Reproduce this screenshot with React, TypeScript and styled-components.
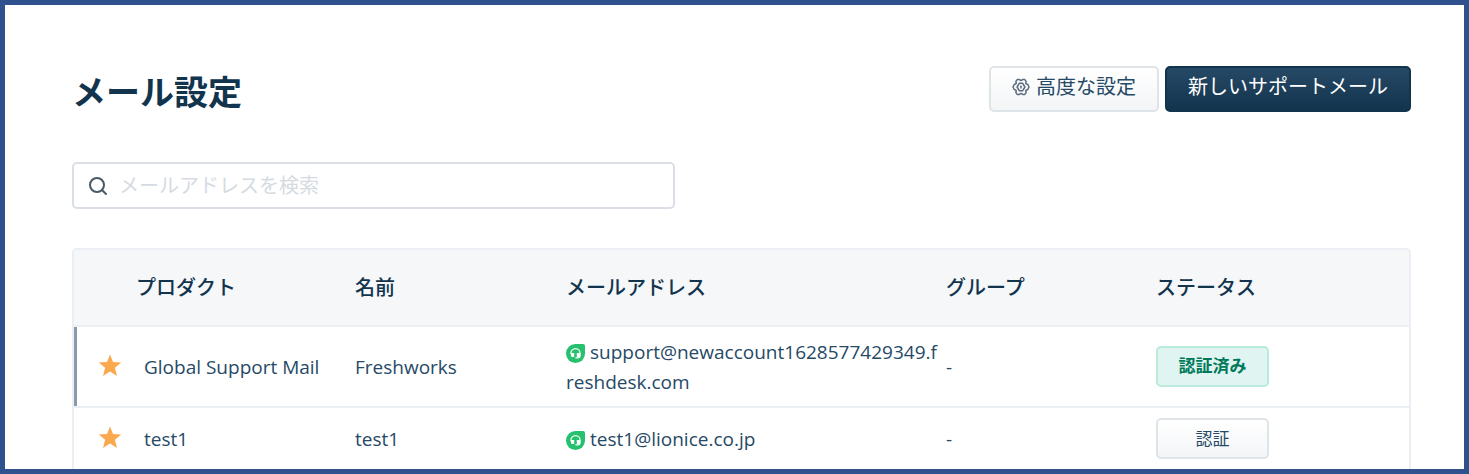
import React from "react";
import styled, { createGlobalStyle, css } from "styled-components";

const GlobalStyle = createGlobalStyle`
  *, *::before, *::after { box-sizing: border-box; }
  body {
    margin: 0;
    background: #fff;
    color: #264966;
    font: 19px/30px "Open Sans", "Noto Sans CJK JP", sans-serif;
  }
  button, input { font-family: inherit; }
`;

const Frame = styled.main`
  min-height: 100vh;
  padding: 61px 53px 0 67px;
  border: 5px solid #2f528f;
`;

const Header = styled.header`
  display: flex;
  justify-content: space-between;
  align-items: flex-start;
`;

const Title = styled.h1`
  margin: 0;
  padding-top: 2px;
  color: #12344d;
  font-size: 34px;
  line-height: 48px;
  font-weight: 700;
`;

const Actions = styled.div`
  display: flex;
  gap: 6px;
`;

const Button = styled.button<{ $primary?: boolean; $small?: boolean }>`
  display: inline-flex;
  align-items: center;
  justify-content: center;
  gap: 6px;
  height: 46px;
  padding: 0 21px 4px;
  border: 2px solid #dfe4e9;
  border-radius: 5px;
  background: linear-gradient(#fff, #f3f5f7);
  color: #264966;
  font-size: 20px;
  line-height: 30px;
  cursor: pointer;
  ${(p) =>
    p.$primary &&
    css`
      border-color: #12344d;
      background: linear-gradient(#264966, #12344d);
      color: #fff;
    `}
  ${(p) =>
    p.$small &&
    css`
      width: 113px;
      height: 41px;
      padding: 0;
      font-size: 17px;
      vertical-align: middle;
    `}
`;

const SearchBox = styled.label`
  display: flex;
  align-items: center;
  gap: 11px;
  width: 45%;
  height: 47px;
  margin: 46px 0 39px;
  padding: 0 14px;
  border: 2px solid #dadfe5;
  border-radius: 5px;
`;

const SearchInput = styled.input`
  flex: 1;
  min-width: 0;
  padding: 0;
  border: 0;
  outline: 0;
  background: none;
  color: #264966;
  font-size: 20px;
  line-height: 30px;
  &::placeholder {
    color: #d5dbe1;
    opacity: 1;
  }
`;

const TableBox = styled.div`
  overflow: hidden;
  border: 2px solid #ebeff3;
  border-bottom: 0;
  border-radius: 5px 5px 0 0;
`;

const Table = styled.table`
  width: 100%;
  table-layout: fixed;
  border-collapse: separate;
  border-spacing: 0;
`;

const Col = styled.col<{ $width?: number }>`
  width: ${(p) => (p.$width ? `${p.$width}px` : "auto")};
`;

const HeadCell = styled.th`
  height: 77px;
  padding: 0;
  border-bottom: 2px solid #ebeff3;
  background: #f5f7f9;
  color: #12344d;
  font-size: 20px;
  font-weight: 500;
  text-align: left;
`;

const Row = styled.tr<{ $height: number; $marked?: boolean }>`
  height: ${(p) => p.$height}px;
  & > td:first-child {
    box-shadow: ${(p) => (p.$marked ? "inset 3px 0 #8a9aa9" : "none")};
  }
  &:not(:last-child) > td {
    border-bottom: 2px solid #ebeff3;
  }
`;

const Cell = styled.td<{ $indent?: number; $end?: number }>`
  padding: 0 ${(p) => p.$end ?? 0}px 0 ${(p) => p.$indent ?? 0}px;
  vertical-align: middle;
  word-break: break-all;
`;

const Badge = styled.span`
  display: inline-flex;
  align-items: center;
  justify-content: center;
  width: 113px;
  height: 41px;
  padding-bottom: 2px;
  border: 2px solid #b9eadc;
  border-radius: 5px;
  background: #e0f5f1;
  color: #00795b;
  font-size: 17px;
  font-weight: 700;
  vertical-align: middle;
`;

const StarSvg = styled.svg`
  display: block;
  margin-bottom: 3px;
`;

const LeafSvg = styled.svg`
  margin-right: 5px;
  vertical-align: -4px;
`;

const Gear = () => (
  <svg width="18" height="18" viewBox="0 0 18 18" fill="none" stroke="#5a6b7a" strokeWidth="1.5" strokeLinejoin="round" aria-hidden="true">
    <path d="M5.2 1.6h2.200L9 2.600l1.600-1h2.200l1.300 1.800-.3 2.200 2 .9L17 9l-1.200 2.500-2 .9.3 2.200-1.300 1.800h-2.200L9 15.400l-1.600 1H5.200l-1.300-1.800.3-2.200-2-.9L1 9l1.200-2.500 2-.9-.3-2.200z" />
    <path d="M7.300 5.300h3.400L12.900 9l-2.200 3.700H7.300L5.100 9z" />
    <path d="M9 7.500v3" />
  </svg>
);

const Magnifier = () => (
  <svg width="20" height="20" viewBox="0 0 20 20" fill="none" stroke="#475867" strokeWidth="2" strokeLinecap="round" aria-hidden="true">
    <circle cx="9" cy="9" r="7" />
    <path d="m14 14 4 4" />
  </svg>
);

const Star = () => (
  <StarSvg width="24" height="23" viewBox="0 0 24 23" fill="#faa94f" role="img" aria-label="既定">
    <path d="M12 .5 15 8l8.200.5-6.300 5.200 2.100 8.200-7-4.500-7 4.500 2.100-8.200L.800 8.500 9 8z" />
  </StarSvg>
);

const Leaf = () => (
  <LeafSvg width="19" height="19" viewBox="0 0 19 19" aria-hidden="true">
    <path d="M9.500 0H17a2 2 0 0 1 2 2v7.500A9.500 9.500 0 1 1 9.500 0z" fill="#25c16f" />
    <path d="M4.900 10V9.200a4.600 4.600 0 0 1 9.200 0v2.600c0 1.300-.800 2-2.100 2.200" fill="none" stroke="#fff" strokeWidth="1.200" />
    <path d="M4.900 9h3.300v4H6.500a1.600 1.600 0 0 1-1.600-1.600zM10.800 9h3.300v2.400a1.600 1.600 0 0 1-1.600 1.600h-1.700zM9.400 13.200h2.600v1.400H9.400z" fill="#fff" />
  </LeafSvg>
);

const mailboxes = [
  {
    product: "Global Support Mail",
    name: "Freshworks",
    email: "support@newaccount1628577429349.freshdesk.com",
    group: "-",
    verified: true,
    height: 81,
  },
  { product: "test1", name: "test1", email: "test1@lionice.co.jp", group: "-", verified: false, height: 61 },
];

export default function App() {
  return (
    <>
      <GlobalStyle />
      <Frame>
        <Header>
          <Title>メール設定</Title>
          <Actions>
            <Button type="button">
              <Gear />
              高度な設定
            </Button>
            <Button type="button" $primary>
              新しいサポートメール
            </Button>
          </Actions>
        </Header>
        <SearchBox>
          <Magnifier />
          <SearchInput type="text" placeholder="メールアドレスを検索" aria-label="メールアドレスを検索" />
        </SearchBox>
        <TableBox>
          <Table>
            <colgroup>
              <Col $width={62} />
              <Col $width={219} />
              <Col $width={211} />
              <Col />
              <Col $width={210} />
              <Col $width={253} />
            </colgroup>
            <thead>
              <tr>
                <HeadCell aria-label="既定" />
                <HeadCell>プロダクト</HeadCell>
                <HeadCell>名前</HeadCell>
                <HeadCell>メールアドレス</HeadCell>
                <HeadCell>グループ</HeadCell>
                <HeadCell>ステータス</HeadCell>
              </tr>
            </thead>
            <tbody>
              {mailboxes.map((m) => (
                <Row key={m.email} $height={m.height} $marked={m.verified}>
                  <Cell $indent={24}>
                    <Star />
                  </Cell>
                  <Cell $indent={8}>{m.product}</Cell>
                  <Cell>{m.name}</Cell>
                  <Cell $end={6}>
                    <Leaf />
                    {m.email}
                  </Cell>
                  <Cell>{m.group}</Cell>
                  <Cell>
                    {m.verified ? (
                      <Badge>認証済み</Badge>
                    ) : (
                      <Button type="button" $small>
                        認証
                      </Button>
                    )}
                  </Cell>
                </Row>
              ))}
            </tbody>
          </Table>
        </TableBox>
      </Frame>
    </>
  );
}
